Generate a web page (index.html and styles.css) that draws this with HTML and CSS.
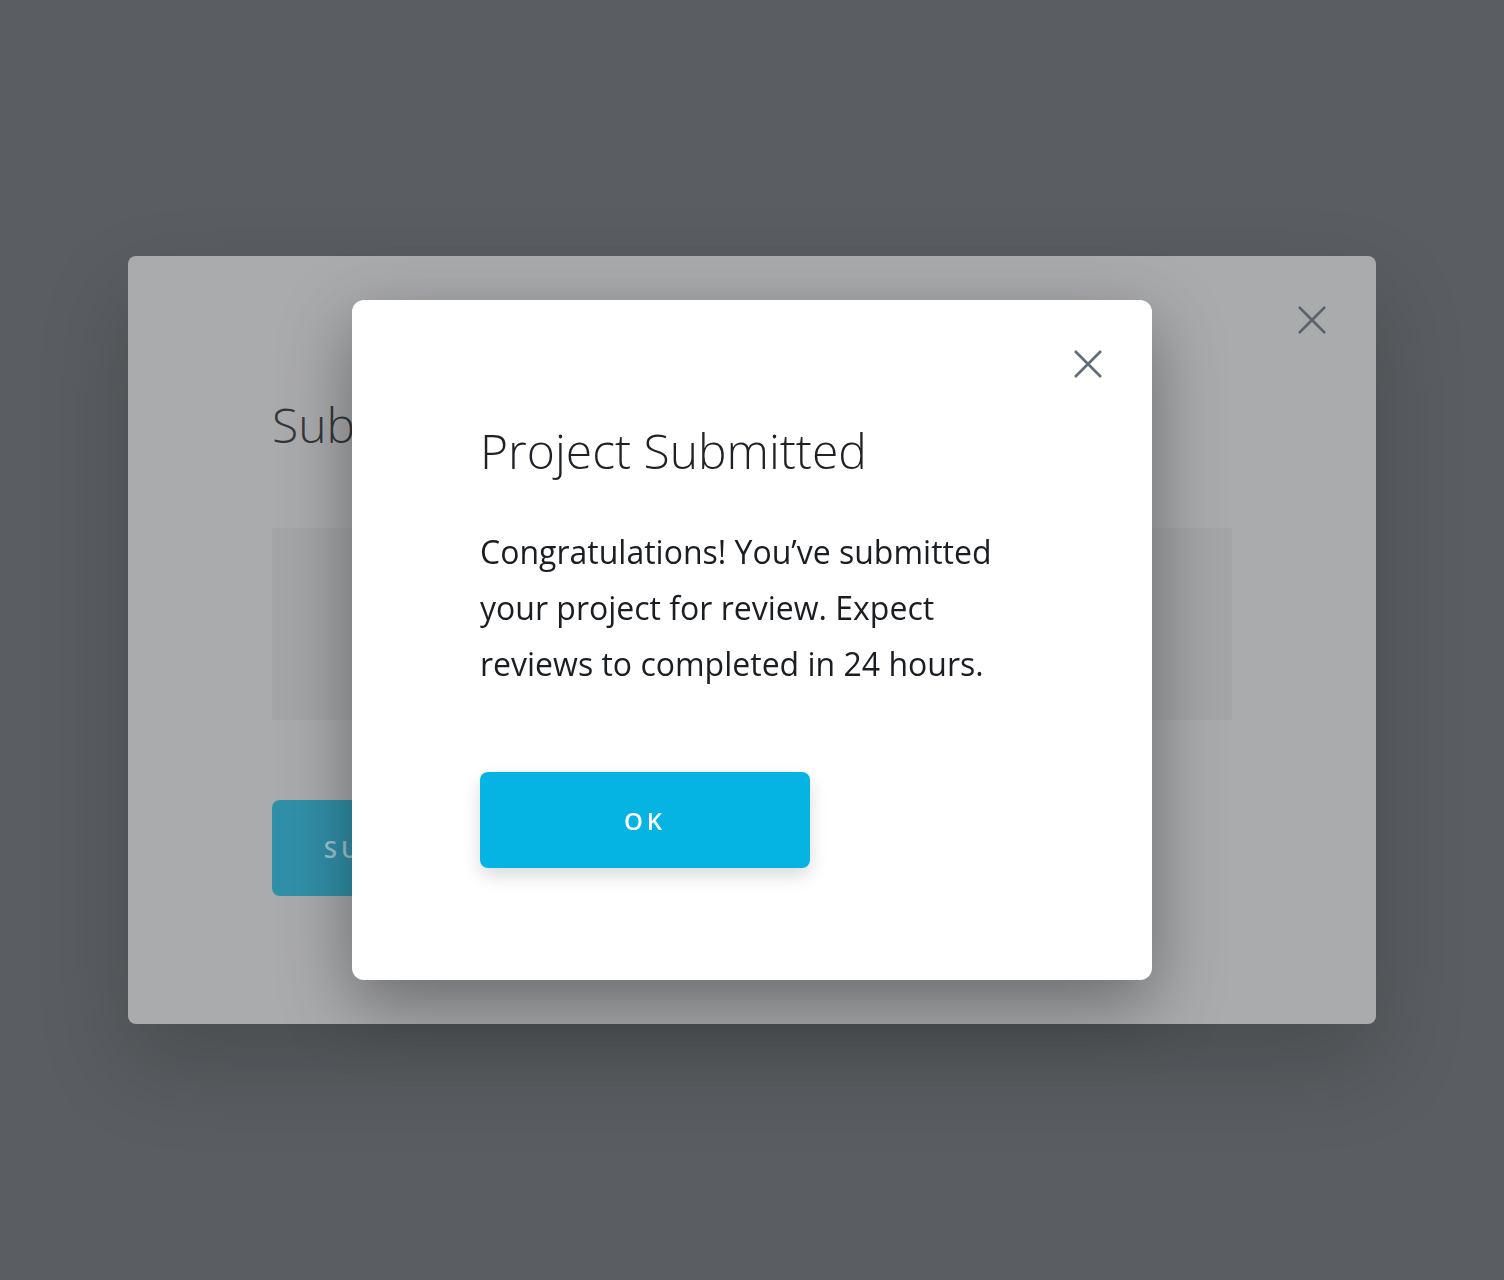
FILE: index.html
```html
<!DOCTYPE html>
<html lang="en">
<head>
<meta charset="utf-8">
<title>Project Submitted</title>
<link rel="stylesheet" href="styles.css">
</head>
<body>
<div class="page">
  <section class="card">
    <button class="close close--dim" aria-label="Close">
      <svg viewBox="0 0 32 32" width="32" height="32"><path d="M3 3 L29 29 M29 3 L3 29" /></svg>
    </button>
    <h1 class="card__title">Submit Project</h1>
    <div class="card__box"></div>
    <button class="btn btn--dim">SUBMIT PROJECT</button>
  </section>
</div>

<div class="dialog" role="dialog" aria-modal="true">
  <button class="close" aria-label="Close">
    <svg viewBox="0 0 32 32" width="32" height="32"><path d="M3 3 L29 29 M29 3 L3 29" /></svg>
  </button>
  <h2 class="dialog__title">Project Submitted</h2>
  <p class="dialog__text">Congratulations! You’ve submitted your project for review. Expect reviews to completed in 24 hours.</p>
  <button class="btn btn--primary">OK</button>
</div>
</body>
</html>
```

FILE: styles.css
```css
* { box-sizing: border-box; }

html, body {
  margin: 0;
  height: 100%;
}

body {
  background: #5a5d61;
  font-family: "Open Sans", "Noto Sans", sans-serif;
  overflow: hidden;
}

.page {
  height: 1280px;
  display: flex;
  align-items: center;
  justify-content: center;
}

.card {
  position: relative;
  width: 1248px;
  height: 768px;
  background: #aaabad;
  border-radius: 8px;
  padding: 137px 144px 0;
  box-shadow: 0 40px 90px rgba(0, 0, 0, 0.18);
  overflow: hidden;
}

.card__title {
  margin: 0;
  font-size: 48px;
  line-height: 64px;
  font-weight: 300;
  color: #34373b;
  white-space: nowrap;
}

.card__box {
  margin-top: 71px;
  width: 960px;
  height: 192px;
  background: #a4a5a7;
}

.btn {
  display: flex;
  align-items: center;
  justify-content: center;
  width: 330px;
  height: 96px;
  border: 0;
  border-radius: 8px;
  font-family: "Open Sans", "Noto Sans", sans-serif;
  font-size: 24px;
  font-weight: 600;
  letter-spacing: 4px;
  padding: 0;
}

.btn--dim {
  width: 354px;
  margin-top: 80px;
  background: #3190a9;
  color: #9fc5cf;
}

.btn--primary {
  margin-top: 80px;
  background: #05b4e3;
  color: #ffffff;
  box-shadow: 0 8px 18px rgba(0, 0, 0, 0.14);
}

.close {
  position: absolute;
  top: 48px;
  right: 48px;
  width: 32px;
  height: 32px;
  padding: 0;
  border: 0;
  background: none;
}

.close svg {
  display: block;
}

.close path {
  stroke: #5f6b76;
  stroke-width: 2.6;
  fill: none;
}

.close--dim path {
  stroke: #5a636b;
}

.dialog {
  position: fixed;
  left: 352px;
  top: 300px;
  width: 800px;
  height: 680px;
  background: #ffffff;
  border-radius: 12px;
  padding: 119px 128px 0;
  box-shadow: 0 24px 70px rgba(0, 0, 0, 0.38);
}

.dialog__title {
  margin: 0;
  font-size: 48px;
  line-height: 64px;
  font-weight: 300;
  color: #1e2126;
}

.dialog__text {
  margin: 41px 0 0;
  font-size: 32px;
  line-height: 56px;
  font-weight: 400;
  color: #1a1d21;
}
```
